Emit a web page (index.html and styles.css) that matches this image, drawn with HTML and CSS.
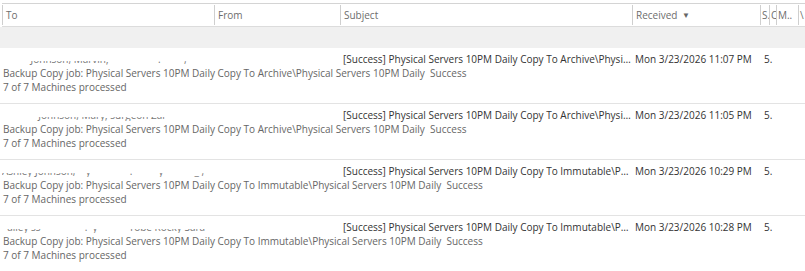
FILE: index.html
```html
<!DOCTYPE html>
<html lang="en">
<head>
  <meta charset="UTF-8">
  <meta name="viewport" content="width=device-width, initial-scale=1.0">
  <title>Inbox</title>
  <link rel="stylesheet" href="styles.css">
</head>
<body>
  <div class="mail-list">
    <div class="list-header cols">
      <div class="col-head">To</div>
      <div class="col-head">From</div>
      <div class="col-head">Subject</div>
      <div class="col-head">Received <span class="sort-arrow">&#9660;</span></div>
      <div class="col-head narrow">S.</div>
      <div class="col-head narrow">C</div>
      <div class="col-head narrow">M..</div>
      <div class="col-head narrow">\</div>
    </div>
    <div class="group-band"></div>

    <div class="mail-item">
      <div class="cols top-line">
        <div class="cell to-cell"><span class="to-clip">&nbsp;&nbsp;&nbsp;&nbsp;&nbsp;&nbsp;&nbsp;&nbsp;&nbsp;&nbsp;&nbsp;Johnson, Marvin; &nbsp;&nbsp;&nbsp;&nbsp;&nbsp;&nbsp;&nbsp;&nbsp;&nbsp;&nbsp;&nbsp;&nbsp;&nbsp;&nbsp;&nbsp;&nbsp;&nbsp;&nbsp;. &nbsp;&nbsp;&nbsp;&nbsp;&nbsp;&nbsp;&nbsp;&nbsp;, &nbsp;&nbsp;&nbsp;&nbsp;&nbsp;&nbsp;&nbsp;&nbsp;&nbsp;&nbsp;&nbsp;&nbsp;y</span></div>
        <div class="cell"></div>
        <div class="cell subject">[Success] Physical Servers 10PM Daily Copy To Archive\Physical Servers 10PM Daily</div>
        <div class="cell received">Mon 3/23/2026 11:07 PM</div>
        <div class="cell size">5.</div>
      </div>
      <div class="preview">Backup Copy job: Physical Servers 10PM Daily Copy To Archive\Physical Servers 10PM Daily&nbsp;&nbsp;Success</div>
      <div class="preview">7 of 7 Machines processed</div>
    </div>

    <div class="mail-item">
      <div class="cols top-line">
        <div class="cell to-cell"><span class="to-clip">&nbsp;&nbsp;&nbsp;&nbsp;&nbsp;&nbsp;&nbsp;&nbsp;&nbsp;&nbsp;&nbsp;&nbsp;&nbsp;&nbsp;Johnson, Mary; surgeon Zal &nbsp;&nbsp;&nbsp;&nbsp;&nbsp;&nbsp;&nbsp;&nbsp;&nbsp;&nbsp;&nbsp;&nbsp;&nbsp;&nbsp;&nbsp;&nbsp;&nbsp;&nbsp;&nbsp;rrrrrrrr</span></div>
        <div class="cell"></div>
        <div class="cell subject">[Success] Physical Servers 10PM Daily Copy To Archive\Physical Servers 10PM Daily</div>
        <div class="cell received">Mon 3/23/2026 11:05 PM</div>
        <div class="cell size">5.</div>
      </div>
      <div class="preview">Backup Copy job: Physical Servers 10PM Daily Copy To Archive\Physical Servers 10PM Daily&nbsp;&nbsp;Success</div>
      <div class="preview">7 of 7 Machines processed</div>
    </div>

    <div class="mail-item">
      <div class="cols top-line">
        <div class="cell to-cell"><span class="to-clip">Ashley Johnson, &nbsp;&nbsp;&nbsp;y &nbsp;&nbsp;&nbsp;&nbsp;&nbsp;&nbsp;&nbsp;&nbsp;&nbsp;&nbsp;&nbsp;&nbsp;&nbsp;&nbsp;. &nbsp;&nbsp;&nbsp;&nbsp;&nbsp;&nbsp;&nbsp;&nbsp;&nbsp;y &nbsp;&nbsp;&nbsp;&nbsp;&nbsp;&nbsp;&nbsp;&nbsp;&nbsp;&nbsp;&nbsp;_ , &nbsp;&nbsp;&nbsp;&nbsp;&nbsp;&nbsp;&nbsp;&nbsp;&nbsp;&nbsp;&nbsp;&nbsp;</span></div>
        <div class="cell"></div>
        <div class="cell subject">[Success] Physical Servers 10PM Daily Copy To Immutable\Physical Servers 10PM Daily</div>
        <div class="cell received">Mon 3/23/2026 10:29 PM</div>
        <div class="cell size">5.</div>
      </div>
      <div class="preview">Backup Copy job: Physical Servers 10PM Daily Copy To Immutable\Physical Servers 10PM Daily&nbsp;&nbsp;Success</div>
      <div class="preview">7 of 7 Machines processed</div>
    </div>

    <div class="mail-item">
      <div class="cols top-line">
        <div class="cell to-cell"><span class="to-clip">&nbsp;&nbsp;ailey ss &nbsp;&nbsp;&nbsp;&nbsp;&nbsp;&nbsp;&nbsp;&nbsp;&nbsp;&nbsp;&nbsp;&nbsp;&nbsp;&nbsp;&nbsp;&nbsp;. &nbsp;y &nbsp;&nbsp;&nbsp;&nbsp;&nbsp;&nbsp;&nbsp;&nbsp;&nbsp;&nbsp;&nbsp;Tobe Rocky Sara &nbsp;&nbsp;&nbsp;&nbsp;&nbsp;&nbsp;&nbsp;</span></div>
        <div class="cell"></div>
        <div class="cell subject">[Success] Physical Servers 10PM Daily Copy To Immutable\Physical Servers 10PM Daily</div>
        <div class="cell received">Mon 3/23/2026 10:28 PM</div>
        <div class="cell size">5.</div>
      </div>
      <div class="preview">Backup Copy job: Physical Servers 10PM Daily Copy To Immutable\Physical Servers 10PM Daily&nbsp;&nbsp;Success</div>
      <div class="preview">7 of 7 Machines processed</div>
    </div>
  </div>
</body>
</html>
```
FILE: styles.css
```css
body {
  margin: 0;
  padding: 0;
  background-color: #fff;
  font-family: "Open Sans", "Noto Sans", Arial, sans-serif;
  font-size: 10px;
  color: #444;
  overflow: hidden;
}

.mail-list {
  padding-top: 3px;
}

.cols {
  display: grid;
  grid-template-columns: 212px 126px 292px 128px 9px 7px 22px 7px;
  margin-left: 2px;
}

.list-header {
  height: 22px;
  border-top: 1px solid #d4d4d4;
  border-bottom: 1px solid #dcdcdc;
  color: #6d6d6d;
}

.col-head {
  border-left: 1px solid #cfcfcf;
  margin: 1px 0 1px;
  padding-left: 3px;
  line-height: 20px;
  white-space: nowrap;
  overflow: hidden;
}

.col-head.narrow {
  padding-left: 1px;
}

.sort-arrow {
  font-size: 8px;
  color: #666;
  position: relative;
  top: -1px;
  margin-left: 2px;
}

.group-band {
  height: 21px;
  background-color: #f0f0f0;
}

.mail-item {
  padding: 4px 0 9px;
  border-bottom: 1px solid #e3e3e3;
}

.top-line {
  height: 14px;
  line-height: 14px;
}

.cell {
  white-space: nowrap;
  overflow: hidden;
  padding-left: 3px;
}

.subject {
  text-overflow: ellipsis;
  color: #333;
}

.received {
  color: #333;
}

.size {
  grid-column: 5 / span 2;
  overflow: visible;
  padding-left: 4px;
  color: #333;
}

.to-cell {
  height: 4px;
  margin-top: 9px;
  padding-left: 0;
  color: #777;
}

.to-clip {
  display: block;
  margin-top: -9px;
  line-height: 14px;
}

.preview {
  padding-left: 3px;
  line-height: 14px;
  color: #666;
  white-space: nowrap;
}
```
